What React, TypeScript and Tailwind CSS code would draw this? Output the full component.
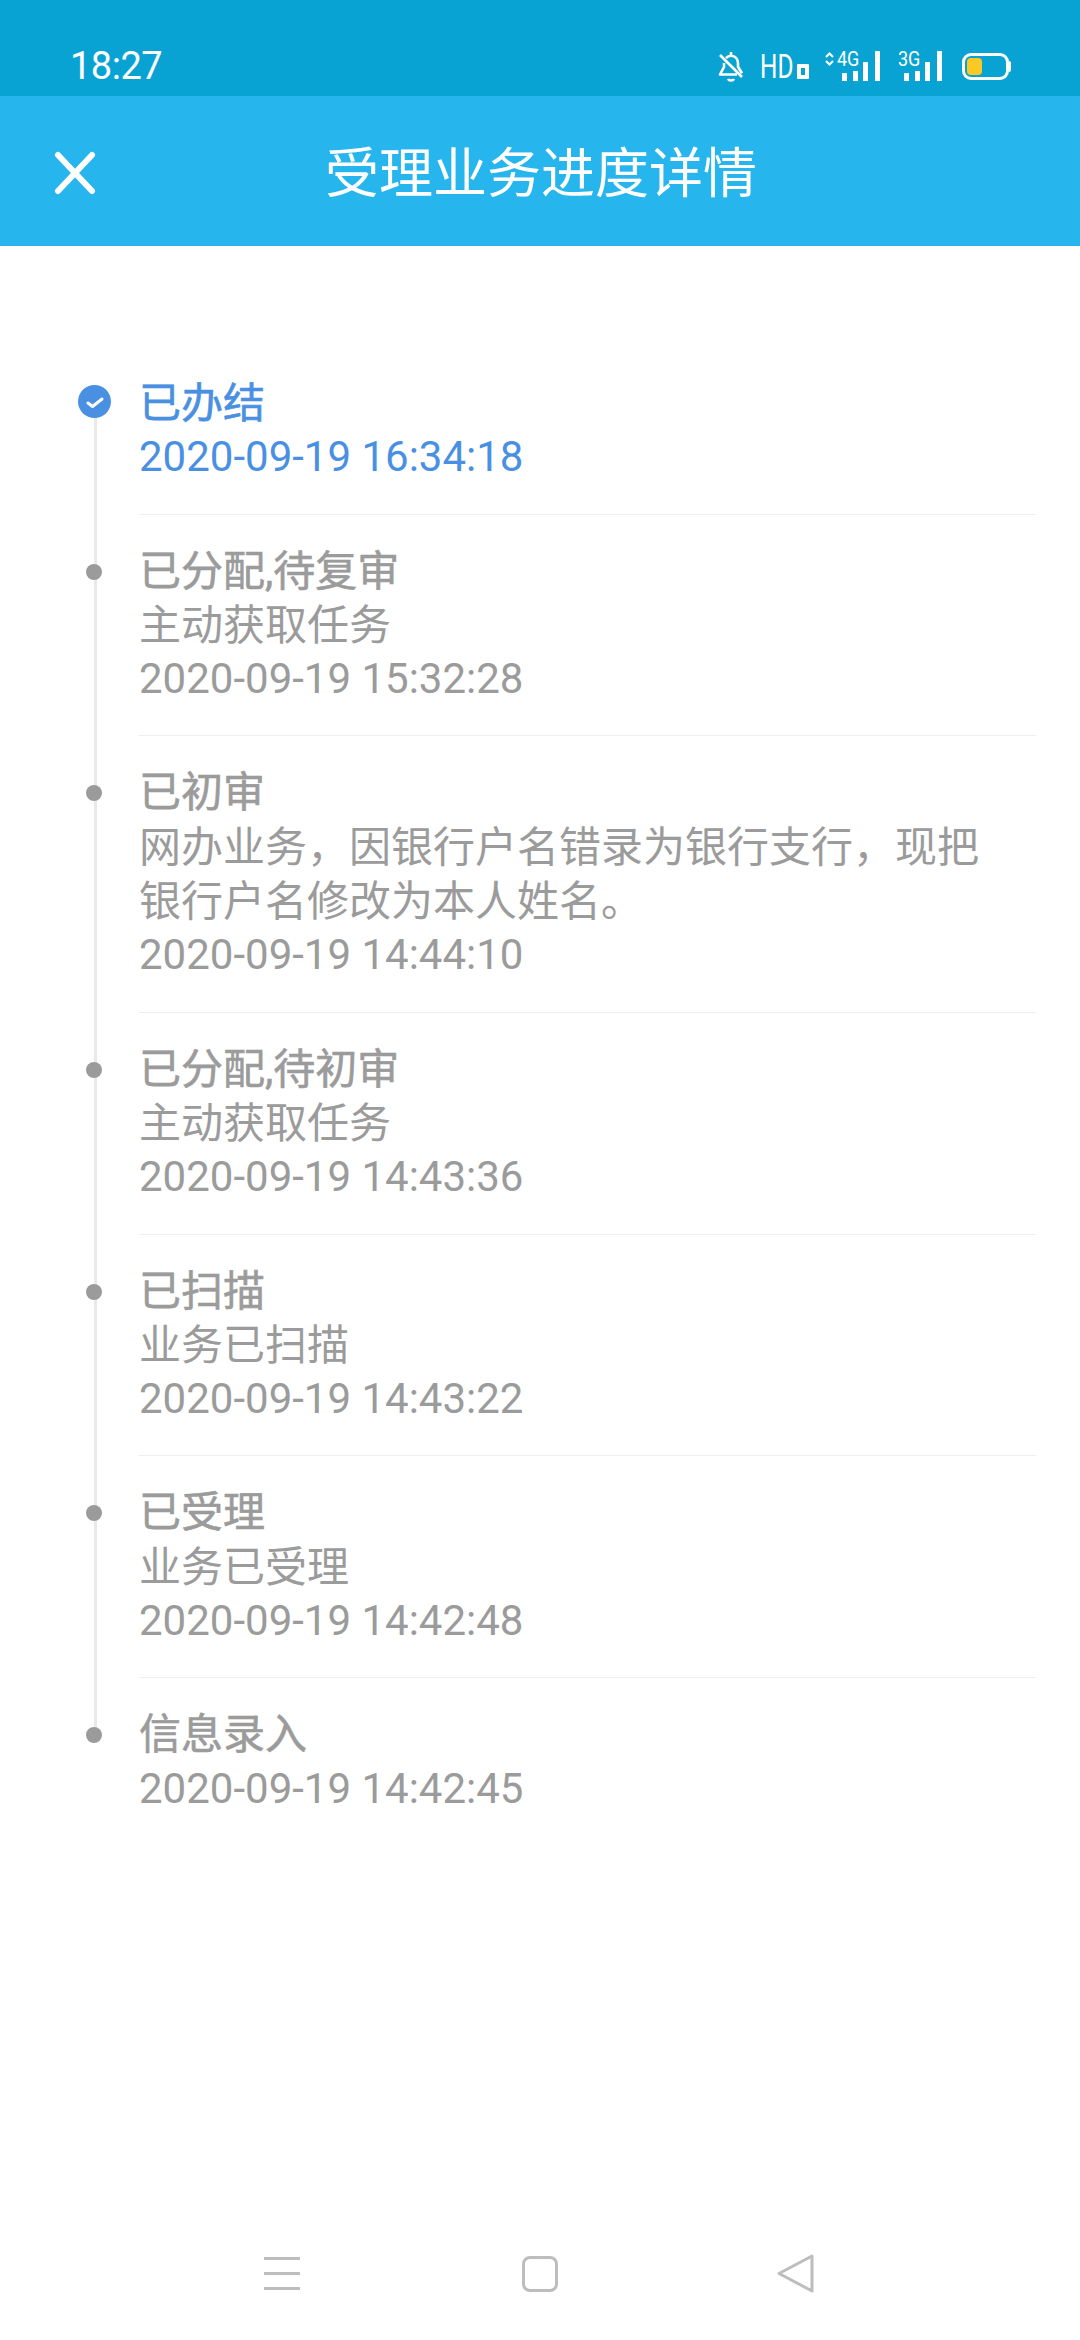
import React from 'react';

interface Step {
  title: string;
  lines?: string[];
  time: string;
}

const steps: Step[] = [
  { title: '已办结', time: '2020-09-19 16:34:18' },
  { title: '已分配,待复审', lines: ['主动获取任务'], time: '2020-09-19 15:32:28' },
  {
    title: '已初审',
    lines: ['网办业务\uFF0C因银行户名错录为银行支行\uFF0C现把', '银行户名修改为本人姓名。'],
    time: '2020-09-19 14:44:10',
  },
  { title: '已分配,待初审', lines: ['主动获取任务'], time: '2020-09-19 14:43:36' },
  { title: '已扫描', lines: ['业务已扫描'], time: '2020-09-19 14:43:22' },
  { title: '已受理', lines: ['业务已受理'], time: '2020-09-19 14:42:48' },
  { title: '信息录入', time: '2020-09-19 14:42:45' },
];

const Signal = () => (
  <svg width="38" height="30" viewBox="0 0 38 30" fill="#fff">
    <rect x="0" y="22" width="5" height="8" rx="0.5" />
    <rect x="11" y="20" width="5" height="10" rx="0.5" />
    <rect x="21" y="11" width="5" height="19" rx="0.5" />
    <rect x="33" y="0" width="5" height="30" rx="0.5" />
  </svg>
);

const StatusBar = () => (
  <div className="h-[96px] bg-[#09a3d3] flex items-center justify-between pl-[70px] pr-[69px] pt-[36px] text-white font-['Roboto',sans-serif]">
    <span className="text-[38px] leading-none tracking-[-0.5px]">18:27</span>
    <div className="flex items-center">
      {/* muted bell */}
      <svg width="26" height="31" viewBox="0 0 26 31" fill="none" stroke="#fff" strokeWidth="2.6" strokeLinejoin="round">
        <path d="M8 7c1.500-1.500 3-2.200 5-2.200 4.500 0 7 3.500 7 8v3l4 6.500" />
        <path d="M6 12v4L2 23.500h17" />
        <path d="M13 1v3" />
        <path d="M2 4l22 22" />
        <path d="M10 28c1 2 5 2 6 0" />
      </svg>
      <span className="ml-[16px] w-[34px] text-[33px] leading-none origin-left scale-x-[0.74]">HD</span>
      <span className="w-[12px] h-[15px] mt-[10px] ml-[3px] border-[4px] border-white bg-[#09a3d3] rounded-[1px]" />
      {/* 4G signal */}
      <div className="relative ml-[16px] w-[55px] h-[30px]">
        <svg className="absolute left-0 top-[1px]" width="9" height="14" viewBox="0 0 9 14" fill="none" stroke="#fff" strokeWidth="2">
          <path d="M1 5l3.500-3.500L8 5M1 9l3.500 3.500L8 9" />
        </svg>
        <span className="absolute left-[12px] -top-[4px] text-[20px] leading-[24px] origin-left scale-x-[0.9]">4G</span>
        <div className="absolute left-[17px] top-0 flex">
          <Signal />
        </div>
      </div>
      {/* 3G signal */}
      <div className="relative ml-[18px] w-[44px] h-[30px]">
        <span className="absolute left-0 -top-[4px] text-[20px] leading-[24px] origin-left scale-x-[0.9]">3G</span>
        <div className="absolute left-[6px] top-0 flex">
          <Signal />
        </div>
      </div>
      {/* battery */}
      <div className="ml-[20px] flex items-center">
        <div className="w-[47px] h-[27px] border-[3px] border-white rounded-[9px] pl-[2px] py-[2px]">
          <div className="w-[15px] h-full bg-[#fbc926] rounded-[4px]" />
        </div>
        <div className="w-[2px] h-[11px] bg-white rounded-r-[2px]" />
      </div>
    </div>
  </div>
);

const Header = () => (
  <div className="relative h-[150px] bg-[#27b5ee] flex items-center justify-center pt-[7px] pl-[2px] text-white">
    <svg className="absolute left-[54px] top-[55px]" width="42" height="44" viewBox="0 0 42 44" fill="none" stroke="#fff" strokeWidth="6" strokeLinecap="round">
      <path d="M4 4l34 36M38 4L4 40" />
    </svg>
    <span className="text-[54px] leading-none">受理业务进度详情</span>
  </div>
);

const TimelineRow = ({ step, index, total }: { step: Step; index: number; total: number }) => {
  const active = index === 0;
  const last = index === total - 1;
  return (
    <div className={`flex ${active ? 'text-[#4a90e2]' : 'text-[#9b9b9b]'}`}>
      {/* rail column */}
      <div className="relative w-[139px] shrink-0">
        {!last && (
          <div className={`absolute left-[94px] w-[3px] bg-[#e8e9eb] bottom-0 ${active ? 'top-[27px]' : 'top-0'}`} />
        )}
        {last && <div className="absolute left-[94px] w-[3px] bg-[#e8e9eb] top-0 h-[56px]" />}
        {active ? (
          <div className="absolute left-[78px] top-[9px] w-[33px] h-[33px] rounded-full bg-[#4a90e2] flex items-center justify-center">
            <svg width="20" height="16" viewBox="0 0 20 16" fill="none" stroke="#fff" strokeWidth="3" strokeLinecap="round" strokeLinejoin="round">
              <path d="M3 9l4.500 3.500L17 5" />
            </svg>
          </div>
        ) : (
          <div className="absolute left-[86px] top-[49px] w-[16px] h-[16px] rounded-full bg-[#9b9b9b]" />
        )}
      </div>
      <div className={`flex-1 ${last ? 'pt-[29px]' : active ? 'border-b-[1px] border-[#eeeeee] pb-[29px]' : 'border-b-[1px] border-[#eeeeee] pt-[29px] pb-[29px]'}`}>
        <div className="text-[42px] leading-[54.3px] translate-y-[1px] [-webkit-text-stroke:0.6px]">{step.title}</div>
        {step.lines?.map((line) => (
          <div key={line} className="text-[42px] leading-[54.3px] translate-y-[1px]">
            {line}
          </div>
        ))}
        <div className="text-[42px] leading-[54.3px]">{step.time}</div>
      </div>
    </div>
  );
};

const NavBar = () => (
  <div className="flex items-center h-[39px] pl-[264px]">
    <svg width="36" height="33" viewBox="0 0 36 33" fill="#bdbdbd">
      <rect x="0" y="0" width="36" height="3" />
      <rect x="0" y="15" width="36" height="3" />
      <rect x="0" y="30" width="36" height="3" />
    </svg>
    <div className="ml-[222px] w-[36px] h-[36px] border-[3px] border-[#bdbdbd] rounded-[8px]" />
    <svg className="ml-[219px]" width="37" height="39" viewBox="0 0 37 39" fill="none" stroke="#bdbdbd" strokeWidth="3" strokeLinejoin="round">
      <path d="M35 2L2 19.500 35 37z" />
    </svg>
  </div>
);

export default function App() {
  return (
    <div className="w-[1080px] h-[2340px] bg-white flex flex-col overflow-hidden font-['Roboto','Noto_Sans_CJK_SC',sans-serif]">
      <StatusBar />
      <Header />
      <div className="flex-1 pt-[130px] pr-[44px]">
        {steps.map((step, i) => (
          <TimelineRow key={step.time} step={step} index={i} total={steps.length} />
        ))}
      </div>
      <div className="pb-[47px]">
        <NavBar />
      </div>
    </div>
  );
}
